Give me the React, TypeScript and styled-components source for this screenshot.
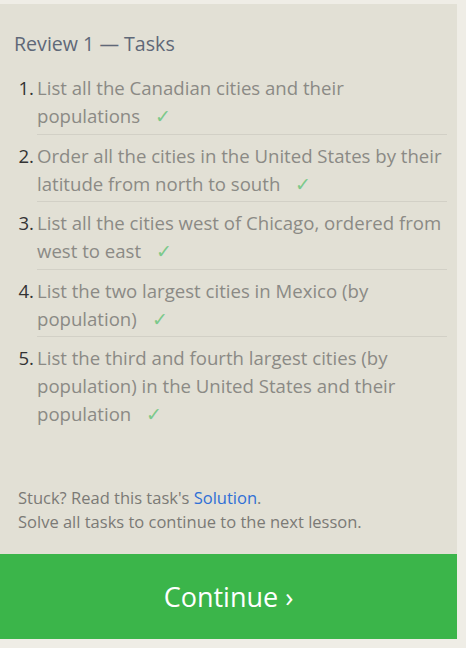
import styled, { createGlobalStyle } from 'styled-components';

const GlobalStyle = createGlobalStyle`
  html, body {
    margin: 0;
    padding: 0;
    background: #efede6;
  }
  body {
    font-family: "Open Sans", "Noto Sans", Arial, sans-serif;
  }
`;

const Panel = styled.div`
  width: 457px;
  margin-top: 4px;
  background: #e2e0d5;
  display: flex;
  flex-direction: column;
`;

const Body = styled.div`
  padding: 28px 10px 0 14px;
`;

const Title = styled.h2`
  margin: 0 0 11px;
  font-size: 19.6px;
  line-height: 24px;
  font-weight: 400;
  color: #5f6878;
`;

const TaskList = styled.ol`
  list-style: none;
  margin: 0;
  padding: 0;
`;

const Task = styled.li`
  display: grid;
  grid-template-columns: 23px 1fr;
`;

const Num = styled.span`
  text-align: right;
  padding-right: 3px;
  padding-top: 7px;
  font-size: 18.6px;
  line-height: 28px;
  color: #333;
`;

const TaskText = styled.div<{ $last?: boolean }>`
  padding: 7px 0 ${(p) => (p.$last ? '0' : '3.5px')};
  border-bottom: ${(p) => (p.$last ? 'none' : '1px solid #d2d0c6')};
  font-size: 18.6px;
  line-height: 28px;
  color: #8b8a85;
`;

const Check = styled.span`
  margin-left: 15px;
  color: #7cc98a;
`;

const Footer = styled.div`
  padding: 58px 10px 20px 18px;
  font-size: 16.5px;
  line-height: 24px;
  color: #7b7a75;
`;

const SolutionLink = styled.a`
  color: #2f6fd6;
  text-decoration: none;
`;

const ContinueButton = styled.button`
  border: none;
  background: #3bb54a;
  color: #fff;
  height: 85px;
  width: 100%;
  font-family: inherit;
  font-size: 27px;
  cursor: pointer;
`;

const tasks = [
  'List all the Canadian cities and their populations',
  'Order all the cities in the United States by their latitude from north to south',
  'List all the cities west of Chicago, ordered from west to east',
  'List the two largest cities in Mexico (by population)',
  'List the third and fourth largest cities (by population) in the United States and their population',
];

export default function App() {
  return (
    <>
      <GlobalStyle />
      <Panel>
        <Body>
          <Title>Review 1 — Tasks</Title>
          <TaskList>
            {tasks.map((t, i) => (
              <Task key={i}>
                <Num>{i + 1}.</Num>
                <TaskText $last={i === tasks.length - 1}>
                  {t}
                  <Check>✓</Check>
                </TaskText>
              </Task>
            ))}
          </TaskList>
        </Body>
        <Footer>
          Stuck? Read this task's <SolutionLink href="#">Solution</SolutionLink>.
          <br />
          Solve all tasks to continue to the next lesson.
        </Footer>
        <ContinueButton>Continue ›</ContinueButton>
      </Panel>
    </>
  );
}
